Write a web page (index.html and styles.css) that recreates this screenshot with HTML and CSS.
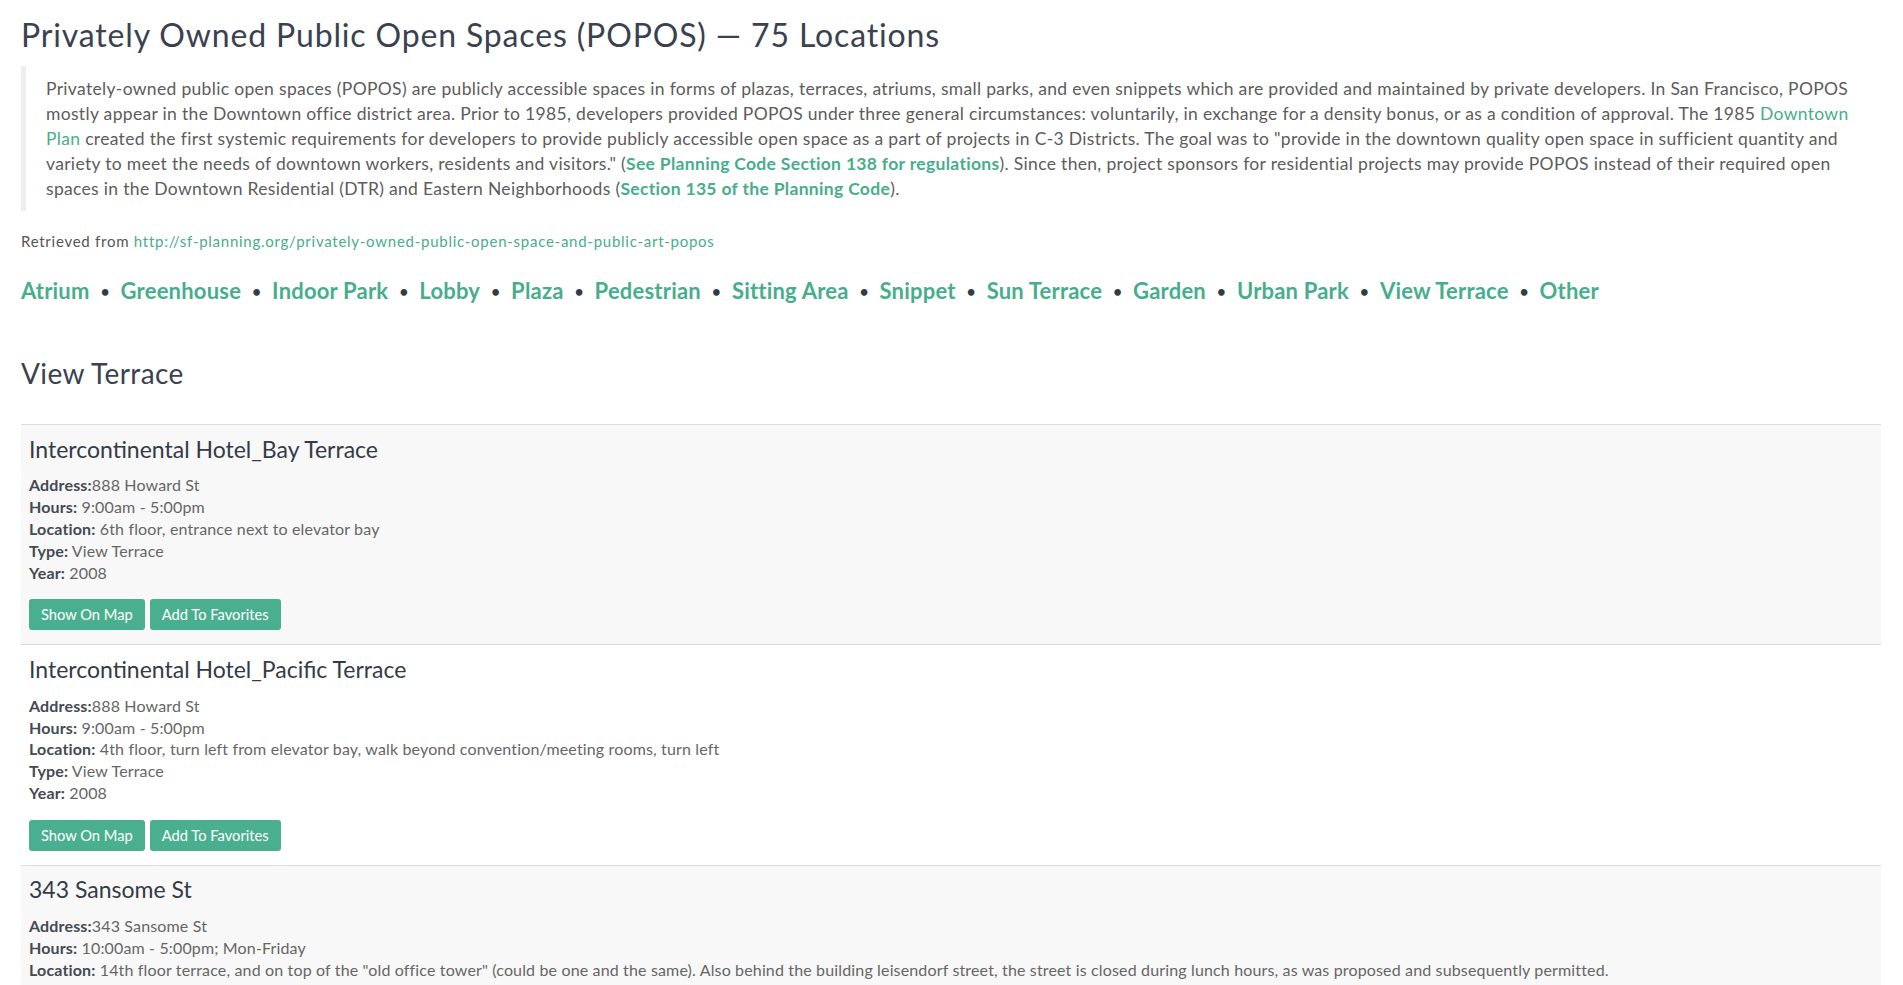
FILE: index.html
```html
<!DOCTYPE html>
<html lang="en">
<head>
<meta charset="utf-8">
<title>POPOS — View Terrace</title>
<link rel="stylesheet" href="styles.css">
</head>
<body>
<div class="page">
  <h1 class="page-title">Privately Owned Public Open Spaces (POPOS) — 75 Locations</h1>

  <blockquote class="intro">
    <p>Privately-owned public open spaces (POPOS) are publicly accessible spaces in forms of plazas, terraces, atriums, small parks, and even snippets which are provided and maintained by private developers. In San Francisco, POPOS mostly appear in the Downtown office district area. Prior to 1985, developers provided POPOS under three general circumstances: voluntarily, in exchange for a density bonus, or as a condition of approval. The 1985 <a href="#" class="link">Downtown Plan</a> created the first systemic requirements for developers to provide publicly accessible open space as a part of projects in C-3 Districts. The goal was to "provide in the downtown quality open space in sufficient quantity and variety to meet the needs of downtown workers, residents and visitors." (<a href="#" class="link strong">See Planning Code Section 138 for regulations</a>). Since then, project sponsors for residential projects may provide POPOS instead of their required open spaces in the Downtown Residential (DTR) and Eastern Neighborhoods (<a href="#" class="link strong">Section 135 of the Planning Code</a>).</p>
  </blockquote>

  <p class="source">Retrieved from <a href="#" class="link">http://sf-planning.org/privately-owned-public-open-space-and-public-art-popos</a></p>

  <nav class="cats"><a href="#">Atrium</a><span class="sep">•</span><a href="#">Greenhouse</a><span class="sep">•</span><a href="#">Indoor Park</a><span class="sep">•</span><a href="#">Lobby</a><span class="sep">•</span><a href="#">Plaza</a><span class="sep">•</span><a href="#">Pedestrian</a><span class="sep">•</span><a href="#">Sitting Area</a><span class="sep">•</span><a href="#">Snippet</a><span class="sep">•</span><a href="#">Sun Terrace</a><span class="sep">•</span><a href="#">Garden</a><span class="sep">•</span><a href="#">Urban Park</a><span class="sep">•</span><a href="#">View Terrace</a><span class="sep">•</span><a href="#">Other</a></nav>

  <h2 class="section-title">View Terrace</h2>

  <div class="spaces">
    <div class="space">
      <h3 class="space-name">Intercontinental Hotel_Bay Terrace</h3>
      <div class="details">
        <div><b>Address:</b>888 Howard St</div>
        <div><b>Hours:</b> 9:00am - 5:00pm</div>
        <div><b>Location:</b> 6th floor, entrance next to elevator bay</div>
        <div><b>Type:</b> View Terrace</div>
        <div><b>Year:</b> 2008</div>
      </div>
      <div class="actions">
        <button class="btn">Show On Map</button>
        <button class="btn">Add To Favorites</button>
      </div>
    </div>
    <div class="space">
      <h3 class="space-name">Intercontinental Hotel_Pacific Terrace</h3>
      <div class="details">
        <div><b>Address:</b>888 Howard St</div>
        <div><b>Hours:</b> 9:00am - 5:00pm</div>
        <div><b>Location:</b> 4th floor, turn left from elevator bay, walk beyond convention/meeting rooms, turn left</div>
        <div><b>Type:</b> View Terrace</div>
        <div><b>Year:</b> 2008</div>
      </div>
      <div class="actions">
        <button class="btn">Show On Map</button>
        <button class="btn">Add To Favorites</button>
      </div>
    </div>
    <div class="space">
      <h3 class="space-name">343 Sansome St</h3>
      <div class="details">
        <div><b>Address:</b>343 Sansome St</div>
        <div><b>Hours:</b> 10:00am - 5:00pm; Mon-Friday</div>
        <div><b>Location:</b> 14th floor terrace, and on top of the "old office tower" (could be one and the same). Also behind the building leisendorf street, the street is closed during lunch hours, as was proposed and subsequently permitted.</div>
        <div><b>Type:</b> View Terrace</div>
        <div><b>Year:</b> 1990</div>
      </div>
      <div class="actions">
        <button class="btn">Show On Map</button>
        <button class="btn">Add To Favorites</button>
      </div>
    </div>
  </div>
</div>
</body>
</html>
```

FILE: styles.css
```css
* { box-sizing: border-box; }

html, body {
  margin: 0;
  padding: 0;
  background: #ffffff;
}

body {
  font-family: "Lato", "Liberation Sans", sans-serif;
  color: #5a5a5a;
  font-size: 14px;
  line-height: 20px;
}

.page {
  padding: 0 22px 0 21px;
}

.link {
  color: #48ad8d;
  text-decoration: none;
}

.link.strong {
  font-weight: 700;
}

.page-title {
  margin: 17px 0 14px;
  font-family: "Lato", "Liberation Sans", sans-serif;
  font-weight: 400;
  font-size: 32px;
  line-height: 1.1;
  letter-spacing: 0.85px;
  color: #3a4250;
}

.intro {
  margin: 0 0 20px;
  padding: 10px 20px;
  border-left: 5px solid #eeeeee;
  font-size: 17.5px;
  line-height: 25px;
  letter-spacing: 0.32px;
  color: #5c5c5c;
}

.intro p {
  margin: 0;
}

.source {
  margin: 0;
  font-size: 15px;
  line-height: 20px;
  letter-spacing: 0.74px;
  color: #555555;
}

.cats {
  display: flex;
  align-items: center;
  margin-top: 27px;
  height: 26.4px;
  font-size: 22px;
  line-height: 26.4px;
  font-weight: 700;
  letter-spacing: 0.2px;
  white-space: nowrap;
}

.cats a {
  color: #48ad8d;
  text-decoration: none;
}

.cats .sep {
  width: 31px;
  text-align: center;
  color: #343b48;
  font-size: 15px;
  line-height: 15px;
  padding-top: 1px;
  letter-spacing: 0;
}

.section-title {
  margin: 53.5px 0 35px;
  font-weight: 400;
  font-size: 28px;
  line-height: 1.1;
  letter-spacing: 0.4px;
  color: #3a4250;
}

.spaces {
  display: flex;
  flex-direction: column;
}

.space {
  border-top: 1px solid #dddddd;
  padding: 8px 8px 8px;
  background: #ffffff;
}

.space:nth-child(odd) {
  background: #f8f8f8;
}

.space-name {
  margin: 3.8px 0 12.5px;
  font-weight: 400;
  font-size: 23px;
  line-height: 1.1;
  color: #343b46;
}

.details {
  font-size: 16px;
  line-height: 21.85px;
  letter-spacing: 0.15px;
  color: #666666;
}

.details b {
  font-weight: 700;
  color: #444a52;
}

.actions {
  display: flex;
  gap: 5px;
  margin: 15.5px 0 6px;
}

.btn {
  font-family: "Lato", "Liberation Sans", sans-serif;
  font-size: 14.7px;
  line-height: 21px;
  padding: 5px 12px;
  border: 0;
  border-radius: 3px;
  background: #4aaf8f;
  color: #ffffff;
  cursor: pointer;
}
```
